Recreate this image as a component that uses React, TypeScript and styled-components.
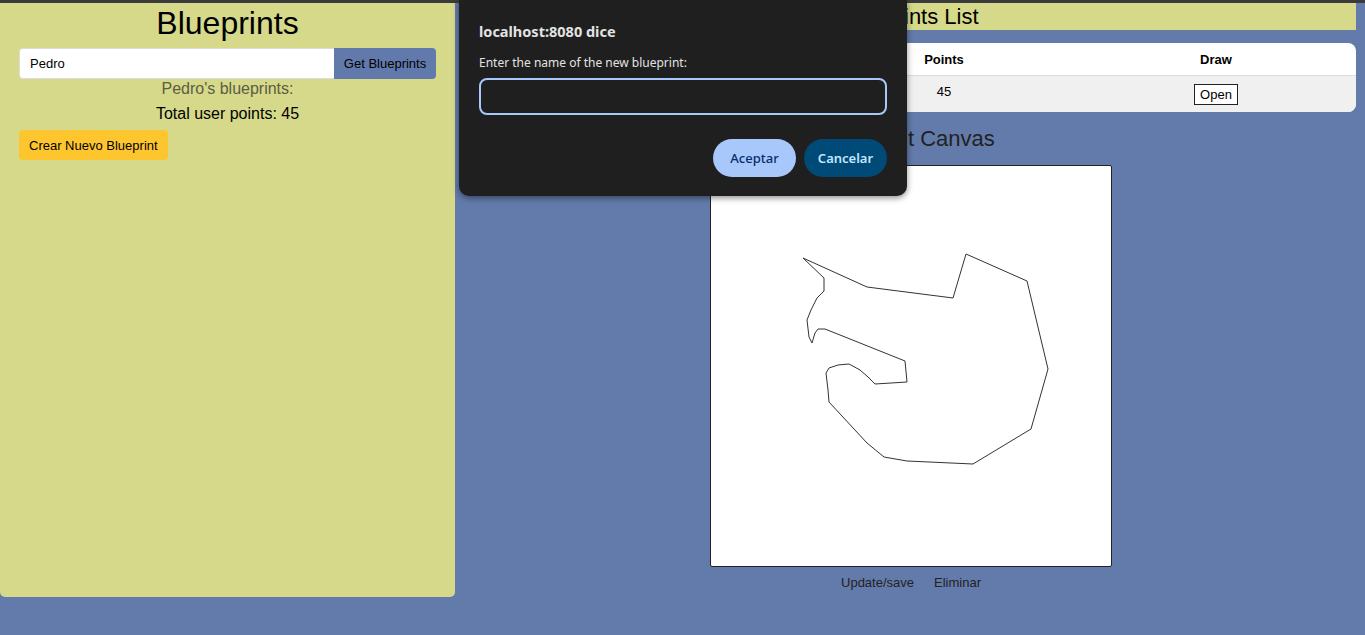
import React from "react";
import styled, { createGlobalStyle } from "styled-components";

const Global = createGlobalStyle`
  html, body { margin: 0; padding: 0; }
  body {
    background: #627bab;
    font-family: "Liberation Sans", Arial, sans-serif;
    height: 635px;
    overflow: hidden;
  }
`;

const TopBar = styled.div`
  height: 3px;
  background: #3b3b3b;
`;

const Layout = styled.div`
  display: grid;
  grid-template-columns: 455px 1fr;
  column-gap: 8px;
  padding-right: 9px;
  align-items: start;
`;

const LeftPanel = styled.section`
  background: #d6d98a;
  height: 594px;
  border-radius: 0 0 5px 5px;
  padding: 0 19px;
  box-sizing: border-box;
  display: flex;
  flex-direction: column;
  align-items: stretch;
`;

const Title = styled.h1`
  margin: 0;
  font-size: 32px;
  font-weight: 400;
  line-height: 40px;
  text-align: center;
  color: #000;
`;

const SearchRow = styled.div`
  display: flex;
  margin-top: 5px;
  height: 31px;
`;

const NameInput = styled.input`
  flex: 1;
  border: 1px solid #dcdcdc;
  border-right: none;
  border-radius: 4px 0 0 4px;
  background: #fff;
  font-family: "Liberation Sans", Arial, sans-serif;
  font-size: 13px;
  padding: 0 10px;
  color: #000;
  outline: none;
`;

const GetButton = styled.button`
  width: 102px;
  border: none;
  border-radius: 0 4px 4px 0;
  background: #617aab;
  color: #000;
  font-family: "Liberation Sans", Arial, sans-serif;
  font-size: 13px;
  padding: 0;
`;

const SubTitle = styled.div<{ $muted?: boolean }>`
  text-align: center;
  font-size: 16px;
  line-height: 19px;
  margin-top: ${(p) => (p.$muted ? "0" : "6px")};
  color: ${(p) => (p.$muted ? "#5b5d45" : "#000")};
`;

const CreateButton = styled.button`
  align-self: flex-start;
  margin-top: 7px;
  height: 30px;
  padding: 0 10px;
  border: none;
  border-radius: 4px;
  background: #fec62e;
  color: #000;
  font-family: "Liberation Sans", Arial, sans-serif;
  font-size: 13px;
`;

const RightColumn = styled.section`
  display: flex;
  flex-direction: column;
  align-items: stretch;
`;

const ListHeader = styled.h2`
  margin: 0;
  background: #d6d98a;
  height: 27px;
  font-size: 22px;
  font-weight: 400;
  line-height: 27px;
  text-align: center;
  color: #000;
`;

const TableCard = styled.div`
  margin-top: 13px;
  background: #fff;
  border-radius: 8px;
  overflow: hidden;
`;

const Table = styled.table`
  width: 100%;
  border-collapse: collapse;
  table-layout: fixed;
  font-size: 13px;
`;

const Th = styled.th<{ $w: number }>`
  width: ${(p) => p.$w}px;
  height: 32px;
  font-weight: 700;
  text-align: center;
  padding: 0;
  border-bottom: 1px solid #dcdcdc;
`;

const Td = styled.td`
  height: 36px;
  background: #f0f0f0;
  text-align: center;
  padding: 0;
  vertical-align: middle;
`;

const PointsCell = styled(Td)`
  vertical-align: top;
  padding-top: 8px;
  box-sizing: border-box;
`;

const OpenButton = styled.button`
  background: #fff;
  border: 1px solid #222;
  font-family: "Liberation Sans", Arial, sans-serif;
  font-size: 13px;
  padding: 2px 5px;
  color: #000;
`;

const CanvasTitle = styled.h2`
  margin: 13px 0 0;
  font-size: 22px;
  font-weight: 400;
  line-height: 27px;
  text-align: center;
  color: #222;
  padding-left: 3px;
`;

const CanvasBox = styled.div`
  align-self: center;
  margin-top: 13px;
  width: 400px;
  height: 400px;
  background: #fff;
  border: 1px solid #222;
  border-radius: 2px;
  margin-left: 3px;
`;

const ActionRow = styled.div`
  display: flex;
  justify-content: center;
  gap: 2px;
  margin-top: 4px;
  padding-left: 3px;
`;

const TextButton = styled.button`
  background: transparent;
  border: none;
  font-family: "Liberation Sans", Arial, sans-serif;
  font-size: 13px;
  color: #222;
  padding: 4px 9px;
`;

const Dialog = styled.div`
  position: absolute;
  left: 459px;
  top: 0;
  width: 448px;
  height: 196px;
  box-sizing: border-box;
  background: #1f1f1f;
  border-radius: 0 0 10px 10px;
  box-shadow: 0 2px 6px rgba(0, 0, 0, 0.45);
  padding: 20px 20px 0;
  font-family: "Noto Sans", "Open Sans", sans-serif;
  color: #e3e3e3;
  display: flex;
  flex-direction: column;
`;

const DialogTitle = styled.div`
  font-size: 14.5px;
  font-weight: 700;
  line-height: 22px;
`;

const DialogLabel = styled.div`
  margin-top: 13px;
  font-size: 12px;
  line-height: 16px;
`;

const DialogInput = styled.div`
  margin-top: 7px;
  height: 37px;
  flex-shrink: 0;
  box-sizing: border-box;
  border: 2px solid #a8c7fa;
  border-radius: 8px;
`;

const DialogActions = styled.div`
  display: flex;
  justify-content: flex-end;
  gap: 8px;
  margin-top: 24px;
`;

const PillButton = styled.button<{ $primary?: boolean }>`
  height: 38px;
  width: 83px;
  border: none;
  border-radius: 19px;
  font-family: "Noto Sans", "Open Sans", sans-serif;
  font-size: 13px;
  font-weight: ${(p) => (p.$primary ? 500 : 600)};
  background: ${(p) => (p.$primary ? "#a8c7fa" : "#004a77")};
  color: ${(p) => (p.$primary ? "#062e6f" : "#c2e7ff")};
`;

const points: [number, number][] = [
  [92, 92], [156, 121], [242, 132], [255, 88], [316, 115], [337, 203],
  [320, 263], [262, 298], [196, 295], [173, 291], [156, 277], [118, 236],
  [117, 224], [115, 207], [118, 202], [127, 199], [138, 198], [149, 204],
  [157, 211], [164, 218], [196, 216], [194, 195], [114, 163], [107, 163],
  [104, 167], [101, 177], [98, 171], [96, 154], [100, 144], [106, 132],
  [110, 128], [113, 125], [113, 112], [92, 92],
];

export default function App() {
  return (
    <>
      <Global />
      <TopBar />
      <Layout>
        <LeftPanel>
          <Title>Blueprints</Title>
          <SearchRow>
            <NameInput defaultValue="Pedro" />
            <GetButton>Get Blueprints</GetButton>
          </SearchRow>
          <SubTitle $muted>Pedro's blueprints:</SubTitle>
          <SubTitle>Total user points: 45</SubTitle>
          <CreateButton>Crear Nuevo Blueprint</CreateButton>
        </LeftPanel>
        <RightColumn>
          <ListHeader>Blueprints List</ListHeader>
          <TableCard>
            <Table>
              <thead>
                <tr>
                  <Th $w={349}>Name</Th>
                  <Th $w={264}>Points</Th>
                  <Th $w={280}>Draw</Th>
                </tr>
              </thead>
              <tbody>
                <tr>
                  <Td>plano1</Td>
                  <PointsCell>45</PointsCell>
                  <Td>
                    <OpenButton>Open</OpenButton>
                  </Td>
                </tr>
              </tbody>
            </Table>
          </TableCard>
          <CanvasTitle>Blueprint Canvas</CanvasTitle>
          <CanvasBox>
            <svg width="400" height="400" viewBox="0 0 400 400">
              <polyline
                points={points.map((p) => p.join(",")).join(" ")}
                fill="none"
                stroke="#333"
                strokeWidth="1"
              />
            </svg>
          </CanvasBox>
          <ActionRow>
            <TextButton>Update/save</TextButton>
            <TextButton>Eliminar</TextButton>
          </ActionRow>
        </RightColumn>
      </Layout>
      <Dialog>
        <DialogTitle>localhost:8080 dice</DialogTitle>
        <DialogLabel>Enter the name of the new blueprint:</DialogLabel>
        <DialogInput />
        <DialogActions>
          <PillButton $primary>Aceptar</PillButton>
          <PillButton>Cancelar</PillButton>
        </DialogActions>
      </Dialog>
    </>
  );
}
